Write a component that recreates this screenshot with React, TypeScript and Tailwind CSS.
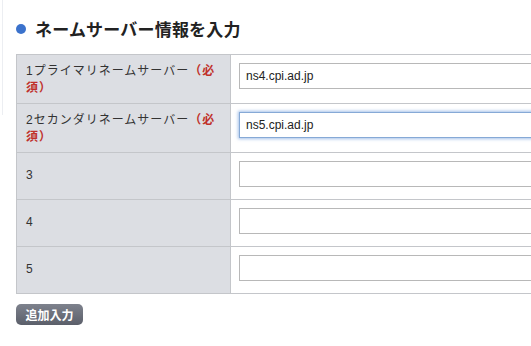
import React from 'react';

const rows = [
  { label: '1プライマリネームサーバー', required: true, value: 'ns4.cpi.ad.jp', focus: false },
  { label: '2セカンダリネームサーバー', required: true, value: 'ns5.cpi.ad.jp', focus: true },
  { label: '3', required: false, value: '', focus: false },
  { label: '4', required: false, value: '', focus: false },
  { label: '5', required: false, value: '', focus: false },
];

const App = () => {
  return (
    <div className="relative w-[531px] h-[346px] bg-white overflow-hidden font-['Liberation_Sans','Noto_Sans_CJK_JP',sans-serif] text-[#333]">
      {/* faint edge of the side panel */}
      <div className="absolute left-[2px] top-0 h-[115px] w-px bg-[#eceef2]"></div>

      {/* Heading */}
      <div className="flex items-center gap-[9px] ml-4 mt-[17px] h-[24px]">
        <span className="w-[10px] h-[10px] rounded-full bg-[#3b72cc]"></span>
        <h2 className="text-[17px] leading-[24px] font-bold tracking-[0.2px] text-[#222] font-['Noto_Sans_CJK_JP',sans-serif]">
          ネームサーバー情報を入力
        </h2>
      </div>

      {/* Form table */}
      <div className="ml-4 mt-[13px] w-[560px] border-t border-l border-[#c4c6ca]">
        {rows.map((row, i) => (
          <div
            key={i}
            className={`grid grid-cols-[214px_1fr] border-b border-[#c4c6ca] ${i < 2 ? 'h-[49px]' : 'h-[47px]'}`}
          >
            <div
              className={`bg-[#dcdee3] border-r border-[#c4c6ca] pl-[9px] pr-[9px] text-[12px] leading-[17px] tracking-[1px] flex ${
                i < 2 ? 'items-start pt-[8px]' : 'items-center pb-[2px]'
              }`}
            >
              <p>
                {row.label}
                {row.required && <span className="text-[#c0302a] font-bold">（必須）</span>}
              </p>
            </div>
            <div className="pl-[8px] pt-[8px]">
              <input
                readOnly
                value={row.value}
                className={`w-[320px] h-[26px] px-[6px] text-[12px] text-[#222] bg-white outline-none border ${
                  row.focus
                    ? 'border-[#86a9d6] shadow-[0_0_3px_1px_rgba(90,140,215,0.55)]'
                    : 'border-[#b8b8b8]'
                }`}
              />
            </div>
          </div>
        ))}
      </div>

      {/* Add button */}
      <button className="ml-4 mt-[10px] w-[67px] h-[21px] rounded-[5px] bg-gradient-to-b from-[#7e828d] to-[#5b5f6a] text-white text-[12px] font-bold leading-[21px] font-['Noto_Sans_CJK_JP',sans-serif]">
        追加入力
      </button>
    </div>
  );
};

export default App;
